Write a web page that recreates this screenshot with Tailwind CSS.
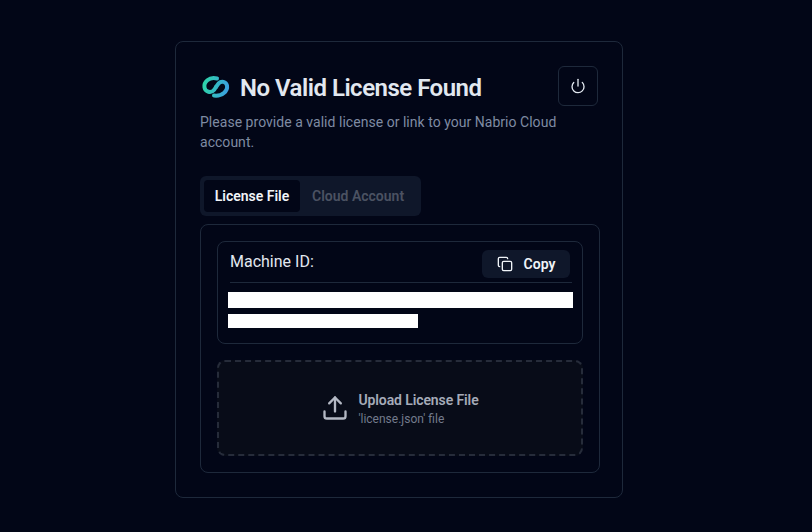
<!DOCTYPE html>
<html lang="en">
<head>
  <meta charset="UTF-8">
  <meta name="viewport" content="width=device-width, initial-scale=1.0">
  <title>No Valid License Found</title>
  <script src="https://cdn.jsdelivr.net/npm/@tailwindcss/browser@4"></script>
</head>
<body class="bg-[#020617] font-['Roboto',sans-serif] h-[532px] overflow-hidden">
  <main class="w-[448px] h-[457px] ml-[175px] mt-[41px] float-left border border-[#1e293b] rounded-lg pl-6 pt-6">
    <header class="flex justify-between w-[398px]">
      <h1 class="flex items-center gap-2.5 h-11 text-2xl font-semibold text-[#e2e8f0] tracking-[-0.5px]">
        <svg class="w-[30px] h-[30px]" viewBox="0 0 30 30" fill="none">
          <defs>
            <linearGradient id="a" x1="3" y1="12" x2="28" y2="16" gradientUnits="userSpaceOnUse">
              <stop offset="0" stop-color="#2dd4a7"/>
              <stop offset="1" stop-color="#3b9fe0"/>
            </linearGradient>
          </defs>
          <!-- left hook runs into the diagonal, right hook picks it up -->
          <path d="M17 5.500C9 3.500 3.500 9 4.500 14.500 5.300 19 11 20.500 14 17l2-3" stroke="url(#a)" stroke-width="4" stroke-linecap="round"/>
          <path d="M16 14l2.500-3.500c3-3 7.500-2 8.500 2 1 5.500-5 11-13 10" stroke="url(#a)" stroke-width="4" stroke-linecap="round"/>
        </svg>
        No Valid License Found
      </h1>
      <button class="w-10 h-10 flex items-center justify-center rounded-md border border-[#1e293b] text-[#e2e8f0]">
        <svg class="w-4 h-4" viewBox="0 0 24 24" fill="none" stroke="currentColor" stroke-width="2" stroke-linecap="round" stroke-linejoin="round">
          <path d="M12 2v10"/>
          <path d="M18.400 6.600a9 9 0 1 1-12.770.040"/>
        </svg>
      </button>
    </header>
    <p class="mt-0.5 w-[390px] text-sm leading-5 text-[#7f8ba3] tracking-[0.03px]">Please provide a valid license or link to your Nabrio Cloud account.</p>

    <div class="mt-6 inline-flex h-10 items-center rounded-md bg-[#0f172a] p-1 text-sm font-semibold align-top">
      <div class="h-8 w-24 flex items-center justify-center rounded-sm bg-[#020617] text-[#f1f5f9]">License File</div>
      <div class="h-8 w-[117px] pl-3 flex items-center text-[#4b5262]">Cloud Account</div>
    </div>

    <section class="mt-2 w-[400px] h-[249px] border border-[#1e293b] rounded-lg p-4">
      <div class="h-[103px] border border-[#1e293b] rounded-lg px-2.5 pt-2">
        <div class="flex justify-between h-7 ml-0.5 border-b border-[#1e293b] pb-1 box-content">
          <span class="text-base leading-6 text-[#e2e8f0]">Machine ID:</span>
          <button class="w-[88px] h-7 flex items-center justify-center gap-[11px] rounded-md bg-[#0f172a] text-sm font-semibold text-[#f1f5f9] -translate-x-0.5">
            <svg class="w-4 h-4" viewBox="0 0 24 24" fill="none" stroke="currentColor" stroke-width="2" stroke-linecap="round" stroke-linejoin="round">
              <rect x="8" y="8" width="14" height="14" rx="2"/>
              <path d="M4 16c-1.100 0-2-.9-2-2V4c0-1.100.9-2 2-2h10c1.100 0 2 .9 2 2"/>
            </svg>
            Copy
          </button>
        </div>
        <div class="bg-white h-4 w-[345px] mt-[9px]"></div>
        <div class="bg-white h-3.5 w-[190px] mt-1.5"></div>
      </div>

      <div class="mt-4 h-24 border-2 border-dashed border-[#262c3a] rounded-lg bg-[#080c18] flex items-center justify-center gap-[9px]">
        <svg class="w-7 h-7 text-[#b4b9c4]" viewBox="0 0 24 24" fill="none" stroke="currentColor" stroke-width="2" stroke-linecap="round" stroke-linejoin="round">
          <path d="M21 15v4a2 2 0 0 1-2 2H5a2 2 0 0 1-2-2v-4"/>
          <path d="M17 8l-5-5-5 5"/>
          <path d="M12 3v12"/>
        </svg>
        <div>
          <div class="text-sm leading-5 font-semibold text-[#a5abb8] tracking-[-0.1px]">Upload License File</div>
          <div class="mt-px text-xs leading-4 text-[#737b8c]">'license.json' file</div>
        </div>
      </div>
    </section>
  </main>
</body>
</html>
